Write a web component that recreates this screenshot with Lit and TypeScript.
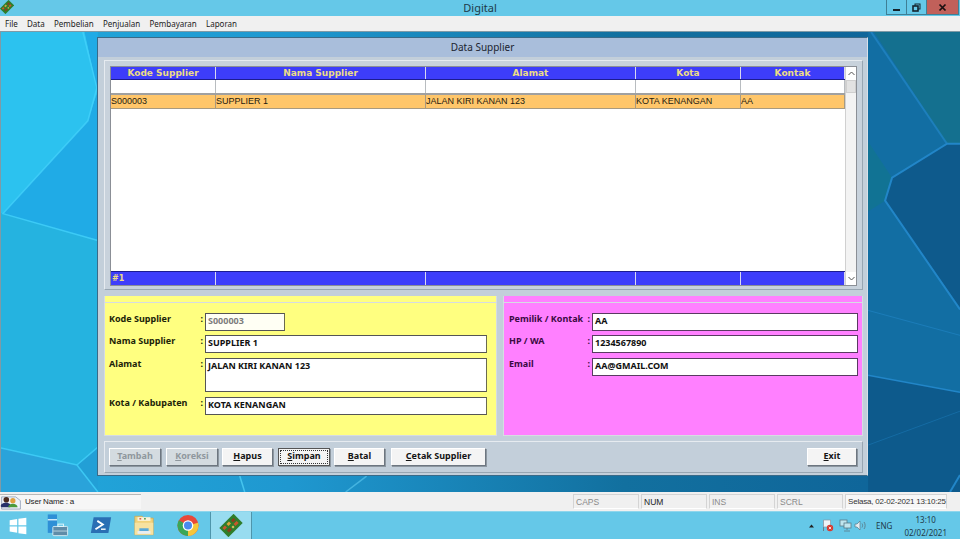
import { LitElement, html, css, svg, type TemplateResult } from 'lit'
import { customElement } from 'lit/decorators.js'

interface Field { label: string, value: string, cls?: string }

const columns = ['Kode Supplier', 'Nama Supplier', 'Alamat', 'Kota', 'Kontak']
const selected = ['S000003', 'SUPPLIER 1', 'JALAN KIRI KANAN 123', 'KOTA KENANGAN', 'AA']
const menus = ['File', 'Data', 'Pembelian', 'Penjualan', 'Pembayaran', 'Laporan']

const leftFields: Field[] = [
  { label: 'Kode Supplier', value: 'S000003', cls: 'code' },
  { label: 'Nama Supplier', value: 'SUPPLIER 1' },
  { label: 'Alamat', value: 'JALAN KIRI KANAN 123', cls: 'tall' },
  { label: 'Kota / Kabupaten', value: 'KOTA KENANGAN' }
]
const rightFields: Field[] = [
  { label: 'Pemilik / Kontak', value: 'AA' },
  { label: 'HP / WA', value: '1234567890' },
  { label: 'Email', value: 'AA@GMAIL.COM' }
]

const appIcon = svg`<g transform="rotate(-45 8 8)"><rect x="1" y="3.500" width="14" height="9" fill="#2f7d2a"/><rect x="2.500" y="5" width="2.500" height="2" fill="#c9572c"/><rect x="6.500" y="5" width="2.500" height="2" fill="#d9a23a"/><rect x="10.500" y="5.500" width="2.500" height="2" fill="#8a3d1f"/><rect x="10" y="8.500" width="3" height="2" fill="#c9572c"/><rect x="3.500" y="8.500" width="3" height="2" fill="#8a3d1f"/><rect x="7.500" y="9" width="1.500" height="1.500" fill="#e0c060"/></g>`

// wallpaper facets, coordinates are desktop pixels
const wallpaper = svg`
  <polygon points="0,0 84,0 97,60 87,89 2,182 0,182" fill="#2cc2ef"/>
  <polygon points="84,0 97,0 97,209 2,182 87,89 97,60" fill="#20abe6"/>
  <polygon points="0,182 97,209 97,416 76,434 0,417" fill="#25b3e0"/>
  <polygon points="0,417 76,434 97,461 0,461" fill="#2aa3da"/>
  <polygon points="76,434 97,416 97,461" fill="#229fd6"/>
  <g fill="none" stroke="#43d2fb" stroke-width="1.5" opacity=".8">
    <polyline points="82,0 96,56 87,89 2,182 97,209"/>
    <polyline points="0,417 76,434 97,416"/>
    <polyline points="76,434 97,461"/>
  </g>
  <polygon points="868,0 960,0 960,461 868,461" fill="#126ea3"/>
  <polygon points="874,0 960,0 960,112 947,112" fill="#14708f"/>
  <polygon points="868,110 892,146 885,169 868,180" fill="#12758f" opacity=".75"/>
  <polygon points="892,146 947,112 960,112 960,276 885,169" fill="#0e5a8c"/>
  <polygon points="868,344 960,361 960,461 868,461" fill="#0d5a8c"/>
  <g fill="none" stroke="#2286c8">
    <polyline points="960,112 947,112 892,146 885,169 960,278" stroke-width="2"/>
    <polyline points="871,0 947,112" stroke-width="2" opacity=".7"/>
    <polyline points="868,344 960,361" stroke-width="1.500"/>
    <polyline points="868,279 960,304" opacity=".6"/>
    <polyline points="868,414 960,380" opacity=".4"/>
    <polyline points="950,461 960,444" stroke-width="2"/>
  </g>
  <polyline points="239,445 244,461" fill="none" stroke="#45c4ee" stroke-width="1.500"/>
  <polyline points="345,461 366,445" fill="none" stroke="#45b4e0" stroke-width="1.500"/>
`

@customElement('app-root')
export class AppRoot extends LitElement {
  static styles = css`
    :host {
      display: block;
      width: 960px;
      height: 539px;
      overflow: hidden;
      font-family: "Noto Sans", sans-serif;
      font-size: 9px;
      color: #111;
    }

    .titlebar {
      height: 16px;
      background: #65c8e8;
      display: grid;
      grid-template-columns: 1fr auto 1fr;
      align-items: start;
    }
    .app-icon { width: 14px; height: 14px; display: block; }
    .app-title {
      font-size: 11px;
      line-height: 16px;
      color: #1d3a48;
    }
    .caption { justify-self: end; display: flex; margin-right: 1px; height: 14px; border: 1px solid #3f7f95; border-top: 0; }
    .caption span { display: flex; align-items: center; justify-content: center; }
    .cap-btn { width: 19px; border-right: 1px solid #3f7f95; }
    .cap-close { width: 31px; background: #c1605a; }

    .menubar {
      height: 15px;
      background: #f0f0f0;
      display: flex;
      align-items: center;
      gap: 9.2px;
      padding-left: 5px;
      color: #222;
      font-size: 8px;
      line-height: 15px;
    }

    .desktop {
      height: 461px;
      position: relative;
      padding: 5px 0 0 96px;
      box-sizing: border-box;
      border-top: 1px solid #7f9aa6;
      border-left: 1px solid #7f9aa6;
      background: linear-gradient(90deg, #22a8dc 0%, #1f98d0 30%, #12709f 65%, #0e6298 100%);
    }
    .wallpaper { position: absolute; inset: 0; width: 100%; height: 100%; }

    .window {
      position: relative;
      width: 771px;
      height: 439px;
      box-sizing: border-box;
      background: #c3cfda;
      border: 1px solid #3a6a88;
      border-right-color: #d8e0e8;
      display: flex;
      flex-direction: column;
    }
    .win-title {
      height: 19px;
      background: #a9bedb;
      text-align: center;
      font-size: 10px;
      line-height: 18px;
      color: #1b2430;
      flex: none;
    }
    .win-body {
      padding: 3px 4px 0 6px;
      display: flex;
      flex-direction: column;
      gap: 6px;
    }

    .frame {
      height: 230px;
      box-sizing: border-box;
      border: 1px solid #e6ebf0;
      border-right-color: #98a6b2;
      border-bottom-color: #98a6b2;
      background: #c8d2dc;
      padding: 5px;
    }
    .grid {
      height: 220px;
      display: flex;
      background: #fff;
      border: 1px solid #8b8f96;
      box-sizing: border-box;
    }
    .table { width: 734px; flex: none; display: flex; flex-direction: column; }
    .row { display: grid; grid-template-columns: 105px 210px 210px 105px 104px; flex: none; box-sizing: border-box; }
    .row > div { box-sizing: border-box; border-right: 1px solid #b8bcc0; overflow: hidden; white-space: nowrap; }
    .head { height: 13px; background: #3d3dfa; border-bottom: 1px solid #1c1c90; }
    .head > div {
      text-align: center;
      font: 700 9px/12px "DejaVu Sans", sans-serif;
      color: #ecdc86;
      border-right-color: #d8d8f0;
    }
    .blank { height: 15px; border-bottom: 2px solid #a0a0a0; }
    .sel { height: 14px; background: #ffc66a; border-bottom: 1px solid #a89a80; }
    .sel > div {
      font: 9px/13px "Liberation Sans", sans-serif;
      color: #1d1a10;
      border-right-color: #a89a80;
    }
    .spacer { flex: 1; }
    .foot { height: 14px; background: #3d3dfa; border-top: 1px solid #1c1c90; }
    .foot > div { font: 700 8px/13px "DejaVu Sans", sans-serif; color: #ecdc86; padding-left: 1px; border-right-color: #d8d8f0; }

    .scrollbar { flex: 1; display: flex; flex-direction: column; background: #f3f3f3; border-left: 1px solid #d0d0d0; }
    .scroll-btn { height: 13px; background: #fff; display: flex; align-items: center; justify-content: center; flex: none; }
    .scroll-btn svg { width: 7px; height: 5px; }
    .thumb { height: 13px; background: #e2e2e2; border: 1px solid #cfcfcf; box-sizing: border-box; flex: none; }
    .track { flex: 1; }

    .panels { display: grid; grid-template-columns: 393px 360px; gap: 6px; }
    .panel {
      height: 140px;
      box-sizing: border-box;
      padding: 11px 9px 0 4px;
      display: flex;
      flex-direction: column;
      gap: 4px;
      font: 700 9px "Noto Sans", sans-serif;
      border: 1px solid #d6dce2;
      border-top: 0;
    }
    .panel.left { background: #ffff80; color: #1c2408; }
    .panel.right { background: #ff80ff; color: #3a0a42; padding: 11px 4px 0 5px; }
    .band { height: 6px; margin: -11px -9px 6px -4px; border-bottom: 1px solid #d6dce2; flex: none; }
    .right .band { margin: -11px -4px 6px -5px; }

    .field { display: grid; align-items: start; }
    .field:nth-child(n+4) { margin-top: 1px; }
    .left .field { grid-template-columns: 96px 1fr; }
    .right .field { grid-template-columns: 83px 1fr; }
    .label { position: relative; line-height: 12px; white-space: nowrap; }
    .label::after { content: ":"; position: absolute; right: 2px; top: 0; }
    .input {
      height: 18px;
      box-sizing: border-box;
      background: #fff;
      border: 1px solid #555;
      border-right-color: #6a6a50;
      padding: 0 2px;
      line-height: 13px;
      color: #111;
    }
    .right .input { border-color: #5a3a62; }
    .input.code { width: 80px; color: #7d7d7d; background: #fffff4; }
    .input.tall { height: 34px; }

    .toolbar {
      height: 32px;
      box-sizing: border-box;
      border: 1px solid #e6ebf0;
      border-right-color: #98a6b2;
      border-bottom-color: #98a6b2;
      padding: 6px 5px 0 4px;
      display: flex;
      gap: 4px;
      margin-top: -1px;
    }
    .btn {
      height: 18px;
      width: 52px;
      box-sizing: border-box;
      background: #f4f4f4;
      border: 1px solid #fff;
      border-right-color: #6d7680;
      border-bottom-color: #6d7680;
      box-shadow: 1px 1px 0 #8d97a0;
      font: 700 9px/13px "Noto Sans", sans-serif;
      text-align: center;
      color: #141414;
      padding: 0 0 3px;
    }
    .btn.off { background: #d4dbe0; color: #8f979d; }
    .btn.focus { border: 1px solid #555; outline: 1px dotted #333; outline-offset: -3px; }
    .btn.nudge { margin-left: 1px; }
    .btn.narrow { width: 51px; }
    .btn.print { width: 95px; margin-left: 2px; }
    .btn.exit { margin-left: auto; width: 50px; }

    .status {
      height: 19px;
      background: #f0f0f0;
      display: flex;
      align-items: stretch;
      gap: 2px;
      padding: 2px 13px 2px 0;
      box-sizing: border-box;
      font: 8.5px/14px "Liberation Sans", sans-serif;
      color: #222;
    }
    .user { width: 141px; display: flex; align-items: center; gap: 3px; flex: none; border-top: 1px solid #b8b8b8; background: #f6f6f6; font-size: 8px; letter-spacing: -.2px; }
    .user svg { width: 22px; height: 15px; }
    .status-fill { flex: 1; }
    .cell {
      width: 66px;
      box-sizing: border-box;
      border: 1px solid #d4d4d4;
      border-bottom-color: #fff;
      padding-left: 2px;
      color: #8a8a8a;
    }
    .cell.on { color: #222; }
    .cell.clock { width: 102px; color: #333; background: #f7f7f7; padding-left: 2px; white-space: nowrap; font-size: 8px; letter-spacing: -.2px; }

    .taskbar {
      height: 28px;
      background: #65c8e8;
      display: flex;
      align-items: center;
      border-top: 1px solid #8fd6ec;
      box-sizing: border-box;
    }
    .task { width: 43.75px; height: 27px; display: flex; align-items: center; justify-content: center; flex: none; }
    .task svg { width: 24px; height: 23px; }
    .task.start { width: 35px; }
    .task.start svg { width: 20px; height: 20px; }
    .task.active { width: 42px; background: #98dcf0; border: 1px solid #4f95ab; border-width: 0 1px; box-sizing: border-box; }
    .tray { margin-left: auto; display: flex; align-items: center; height: 27px; color: #1f3b48; font: 8px "Noto Sans", sans-serif; }
    .tray svg { display: block; }
    .tray-icons { display: flex; align-items: center; gap: 5px; margin-right: 9px; }
    .tray-icons .up { margin-right: 2px; }
    .tray-icons .speaker { margin-left: -3px; }
    .lang { margin-right: 12px; }
    .time { text-align: center; line-height: 13px; margin-right: 13px; }
  `

  private _field (f: Field): TemplateResult {
    return html`<div class="field">
      <div class="label">${f.label}</div>
      <div class="input ${f.cls ?? ''}">${f.value}</div>
    </div>`
  }

  render (): TemplateResult {
    return html`
      <div class="titlebar">
        <svg class="app-icon" viewBox="0 0 16 16">${appIcon}</svg>
        <div class="app-title">Digital</div>
        <div class="caption">
          <span class="cap-btn"><svg width="9" height="9" viewBox="0 0 9 9"><rect x="1" y="6" width="7" height="2" fill="#15242c"/></svg></span>
          <span class="cap-btn"><svg width="9" height="9" viewBox="0 0 9 9" fill="none" stroke="#15242c"><rect x="3" y="1" width="5" height="5"/><rect x="1" y="3" width="5" height="5" fill="#65c8e8" stroke-width="1.6"/></svg></span>
          <span class="cap-close"><svg width="9" height="9" viewBox="0 0 9 9"><path d="M1.500 1.500 7.500 7.500M7.500 1.500 1.500 7.500" stroke="#1a1010" stroke-width="1.700"/></svg></span>
        </div>
      </div>
      <div class="menubar">${menus.map(m => html`<span>${m}</span>`)}</div>
      <div class="desktop">
        <svg class="wallpaper" viewBox="0 0 960 461" preserveAspectRatio="none">${wallpaper}</svg>
        <div class="window">
          <div class="win-title">Data Supplier</div>
          <div class="win-body">
            <div class="frame">
              <div class="grid">
                <div class="table">
                  <div class="row head">${columns.map(c => html`<div>${c}</div>`)}</div>
                  <div class="row blank">${columns.map(() => html`<div></div>`)}</div>
                  <div class="row sel">${selected.map(c => html`<div>${c}</div>`)}</div>
                  <div class="spacer"></div>
                  <div class="row foot"><div>#1</div><div></div><div></div><div></div><div></div></div>
                </div>
                <div class="scrollbar">
                  <div class="scroll-btn"><svg viewBox="0 0 7 5"><path d="M.5 4 3.500 1l3 3" fill="none" stroke="#555"/></svg></div>
                  <div class="thumb"></div>
                  <div class="track"></div>
                  <div class="scroll-btn"><svg viewBox="0 0 7 5"><path d="M.5 1l3 3 3-3" fill="none" stroke="#555"/></svg></div>
                </div>
              </div>
            </div>
            <div class="panels">
              <div class="panel left"><div class="band"></div>${leftFields.map(f => this._field(f))}</div>
              <div class="panel right"><div class="band"></div>${rightFields.map(f => this._field(f))}</div>
            </div>
            <div class="toolbar">
              <button class="btn off"><u>T</u>ambah</button>
              <button class="btn off nudge"><u>K</u>oreksi</button>
              <button class="btn narrow"><u>H</u>apus</button>
              <button class="btn focus nudge"><u>S</u>impan</button>
              <button class="btn narrow"><u>B</u>atal</button>
              <button class="btn print"><u>C</u>etak Supplier</button>
              <button class="btn exit"><u>E</u>xit</button>
            </div>
          </div>
        </div>
      </div>
      <div class="status">
        <div class="user">
          <svg viewBox="0 0 22 16"><path d="M1 2h15l5 4v9H1z" fill="#eef2f8" stroke="#7a8aa8" stroke-width=".7"/><circle cx="6" cy="5" r="3" fill="#4a2a20"/><path d="M0 12c0-5 11-5 11 0l-1 1H1z" fill="#27306a"/><circle cx="13" cy="6" r="2.800" fill="#e0a040"/><path d="M8 13c0-5 10-5 10 0z" fill="#4a9a3a"/></svg>
          <span>User Name : a</span>
        </div>
        <div class="status-fill"></div>
        <div class="cell">CAPS</div>
        <div class="cell on">NUM</div>
        <div class="cell">INS</div>
        <div class="cell">SCRL</div>
        <div class="cell clock">Selasa, 02-02-2021 13:10:25</div>
      </div>
      <div class="taskbar">
        <div class="task start"><svg viewBox="0 0 24 24"><path d="M2 5l9-1.500V11H2zM12.500 3.200 22 2v9h-9.500zM2 12.500h9V20l-9-1.500zM12.500 12.500H22V22l-9.500-1.300z" fill="#fff"/></svg></div>
        <div class="task"><svg viewBox="0 0 26 24"><rect x="3" y="0" width="10" height="20" fill="#2e8fd6"/><rect x="3" y="5" width="10" height="1.500" fill="#d8eefa"/><rect x="8.500" y="13" width="16" height="10" rx="1" fill="#5f8ca8" stroke="#e4f6fb" stroke-width=".9"/><rect x="14" y="10.500" width="6" height="2.500" fill="none" stroke="#e4f6fb"/><path d="M9 18h15" stroke="#e4f6fb" stroke-width=".7"/></svg></div>
        <div class="task"><svg viewBox="0 0 26 24"><path d="M5 3h19l-3 17H2z" fill="#2a6fb4"/><path d="M9 7l6 4-8 5" fill="none" stroke="#fff" stroke-width="2"/><path d="M13 16h5" stroke="#fff" stroke-width="1.500"/></svg></div>
        <div class="task"><svg viewBox="0 0 26 24"><path d="M3 2h8l2 2h10v18H3z" fill="#f2d27a" stroke="#c9a24a" stroke-width=".7"/><rect x="6" y="3" width="14" height="4" fill="#fbf3d8"/><rect x="8" y="4" width="2" height="1.500" fill="#d85040"/><rect x="13" y="4" width="2" height="1.500" fill="#4a9a50"/><rect x="3" y="9" width="20" height="13" fill="#f7e2a0"/><rect x="8" y="15" width="10" height="3" fill="#5aa9d8"/><rect x="6" y="18" width="14" height="3" fill="#e8eef2"/></svg></div>
        <div class="task"><svg viewBox="0 0 24 24"><circle cx="12" cy="12" r="11" fill="#e8483a"/><path d="M12 12 22.500 9A11 11 0 0 1 12 23z" fill="#f6c63a"/><path d="M12 12 12 23A11 11 0 0 1 2.500 6.500z" fill="#3aa756"/><circle cx="12" cy="12" r="5.500" fill="#fff"/><circle cx="12" cy="12" r="4.200" fill="#4a8af0"/></svg></div>
        <div class="task active"><svg viewBox="0 0 16 16">${appIcon}</svg></div>
        <div class="tray">
          <div class="tray-icons">
            <svg class="up" width="5" height="4" viewBox="0 0 7 4"><path d="M0 4 3.500 0 7 4z" fill="#222"/></svg>
            <svg width="13" height="13" viewBox="0 0 12 13"><path d="M2 1v11" stroke="#6a7a88"/><path d="M2 1h7v7H2z" fill="#eef3f6" stroke="#8a9aa8" stroke-width=".7"/><circle cx="8.500" cy="9" r="3.200" fill="#d83a30"/><path d="M7.300 7.800 9.700 10.200M9.700 7.800 7.300 10.200" stroke="#fff" stroke-width=".8"/></svg>
            <svg width="13" height="13" viewBox="0 0 13 13" fill="#bfe6ef" stroke="#5a7a88" stroke-width=".8"><rect x="1" y="1" width="7" height="6"/><rect x="5" y="4" width="7" height="5"/><path d="M8 9v2M5 12h6" fill="none"/></svg>
            <svg class="speaker" width="13" height="13" viewBox="0 0 13 13"><path d="M1 5h2l3-3v9L3 8H1z" fill="#e4ecf1" stroke="#5a7a88" stroke-width=".7"/><path d="M8 4.500c.8 1.200.8 2.800 0 4M10 3c1.500 2 1.500 5 0 7" fill="none" stroke="#5a7a88" stroke-width=".9"/></svg>
          </div>
          <span class="lang">ENG</span>
          <div class="time">13:10<br>02/02/2021</div>
        </div>
      </div>
    `
  }
}
